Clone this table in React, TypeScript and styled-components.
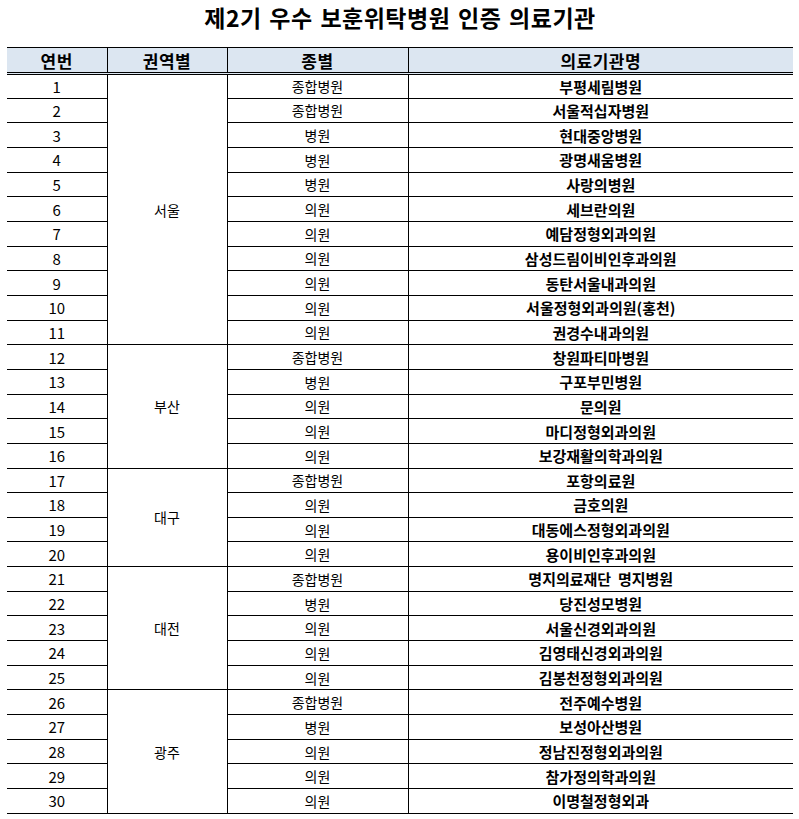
import React from "react";
import styled, { createGlobalStyle } from "styled-components";

const GlobalStyle = createGlobalStyle`
  html, body { margin: 0; padding: 0; background: #ffffff; }
  body { font-family: "Noto Sans CJK KR", "Noto Sans", sans-serif; color: #000; }
`;

const Page = styled.div`
  width: 799px;
  padding: 0 6px 0 7px;
  box-sizing: border-box;
`;

const Title = styled.h1`
  margin: 0;
  height: 47px;
  display: flex;
  align-items: center;
  justify-content: center;
  padding-bottom: 12px;
  box-sizing: border-box;
  font-size: 23px;
  font-weight: 700;
  letter-spacing: 0.5px;
  word-spacing: 2px;
  line-height: 1;
`;

const Table = styled.table`
  width: 786px;
  border-collapse: collapse;
  table-layout: fixed;
`;

const HeadRow = styled.tr`
  height: 26px;
  background: #dce6f1;
`;

const Th = styled.th<{ $first?: boolean }>`
  font-size: 17px;
  font-weight: 700;
  letter-spacing: 0.5px;
  text-align: center;
  padding: 0;
  line-height: 1;
  border-top: 1px solid #000;
  border-bottom: 3px double #000;
  border-left: ${(p) => (p.$first ? "none" : "1px solid #000")};
`;

const Row = styled.tr`
  height: 24.67px;
`;

const Td = styled.td<{ $bold?: boolean; $first?: boolean }>`
  font-size: ${(p) => (p.$bold ? "15px" : p.$first ? "15px" : "14px")};
  font-weight: ${(p) => (p.$bold ? 600 : 400)};
  text-align: center;
  vertical-align: middle;
  padding: 0;
  line-height: 1;
  white-space: pre;
  border-top: 1px solid #000;
  border-bottom: 1px solid #000;
  border-left: ${(p) => (p.$first ? "none" : "1px solid #000")};
`;

type Item = [number, string, string];
const groups: { region: string; items: Item[] }[] = [
  {
    region: "서울",
    items: [
      [1, "종합병원", "부평세림병원"],
      [2, "종합병원", "서울적십자병원"],
      [3, "병원", "현대중앙병원"],
      [4, "병원", "광명새움병원"],
      [5, "병원", "사랑의병원"],
      [6, "의원", "세브란의원"],
      [7, "의원", "예담정형외과의원"],
      [8, "의원", "삼성드림이비인후과의원"],
      [9, "의원", "동탄서울내과의원"],
      [10, "의원", "서울정형외과의원(홍천)"],
      [11, "의원", "권경수내과의원"],
    ],
  },
  {
    region: "부산",
    items: [
      [12, "종합병원", "창원파티마병원"],
      [13, "병원", "구포부민병원"],
      [14, "의원", "문의원"],
      [15, "의원", "마디정형외과의원"],
      [16, "의원", "보강재활의학과의원"],
    ],
  },
  {
    region: "대구",
    items: [
      [17, "종합병원", "포항의료원"],
      [18, "의원", "금호의원"],
      [19, "의원", "대동에스정형외과의원"],
      [20, "의원", "용이비인후과의원"],
    ],
  },
  {
    region: "대전",
    items: [
      [21, "종합병원", "명지의료재단  명지병원"],
      [22, "병원", "당진성모병원"],
      [23, "의원", "서울신경외과의원"],
      [24, "의원", "김영태신경외과의원"],
      [25, "의원", "김봉천정형외과의원"],
    ],
  },
  {
    region: "광주",
    items: [
      [26, "종합병원", "전주예수병원"],
      [27, "병원", "보성아산병원"],
      [28, "의원", "정남진정형외과의원"],
      [29, "의원", "참가정의학과의원"],
      [30, "의원", "이명철정형외과"],
    ],
  },
];

export default function App() {
  return (
    <>
      <GlobalStyle />
      <Page>
        <Title>제2기 우수 보훈위탁병원 인증 의료기관</Title>
        <Table>
          <colgroup>
            <col style={{ width: 100 }} />
            <col style={{ width: 120 }} />
            <col style={{ width: 181 }} />
            <col style={{ width: 385 }} />
          </colgroup>
          <thead>
            <HeadRow>
              <Th $first>연번</Th>
              <Th>권역별</Th>
              <Th>종별</Th>
              <Th>의료기관명</Th>
            </HeadRow>
          </thead>
          <tbody>
            {groups.map((g) =>
              g.items.map(([n, kind, name], i) => (
                <Row key={n}>
                  <Td $first>{n}</Td>
                  {i === 0 && <Td rowSpan={g.items.length}>{g.region}</Td>}
                  <Td>{kind}</Td>
                  <Td $bold>{name}</Td>
                </Row>
              ))
            )}
          </tbody>
        </Table>
      </Page>
    </>
  );
}
